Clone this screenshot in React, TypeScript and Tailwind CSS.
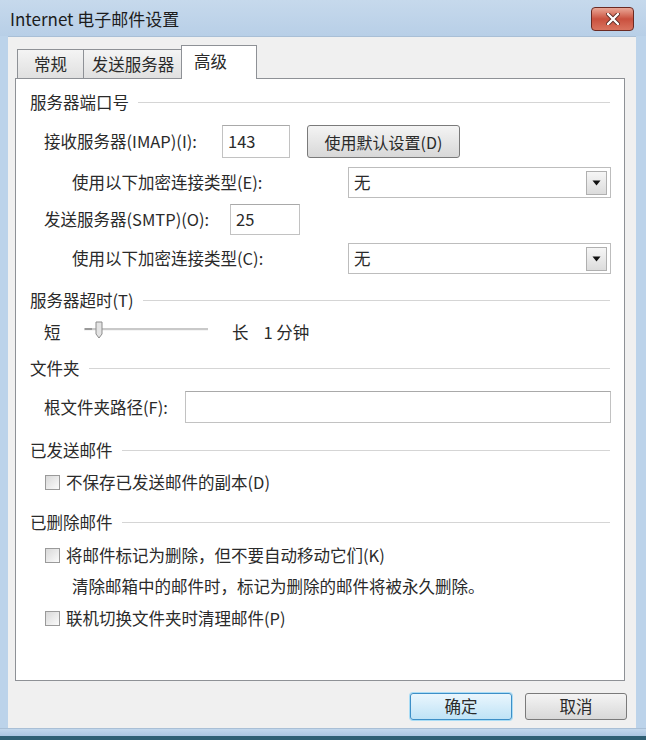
import { ReactNode } from 'react';

const FONT = "font-['Noto_Sans_CJK_SC','Noto_Sans',sans-serif]";

function GroupHeader({ title, className = '' }: { title: string; className?: string }) {
  return (
    <div className={`flex items-center h-[20px] pr-[1px] ${className}`}>
      <span className="whitespace-nowrap">{title}</span>
      <div className="flex-1 ml-[9px] h-[2px] border-t border-[#d5d5d5] border-b-white mt-[1px]" />
    </div>
  );
}

function TextBox({ value, className = '' }: { value?: string; className?: string }) {
  return (
    <div
      className={`h-full bg-white border border-[#c2c2c2] border-t-[#a9a9a9] flex items-center pl-[5px] ${className}`}
    >
      {value}
    </div>
  );
}

function Select({ value }: { value: string }) {
  return (
    <div className="w-[263px] h-[31px] bg-white border border-[#bdbdbd] flex items-center justify-between pl-[5px] pr-[3px]">
      <span>{value}</span>
      <div className="w-[21px] h-[24px] border border-[#b0b0b0] bg-gradient-to-b from-[#f6f6f6] to-[#dcdcdc] flex items-center justify-center">
        <svg width="9" height="6" viewBox="0 0 9 6">
          <path d="M0.5 0.5 H8.5 L4.5 5.5 Z" fill="#111" />
        </svg>
      </div>
    </div>
  );
}

function CheckRow({ label, className = '' }: { label: string; className?: string }) {
  return (
    <div className={`flex items-center h-[20px] pl-[15px] ${className}`}>
      <div className="w-[15px] h-[15px] border border-[#9a9a9a] bg-gradient-to-br from-[#d9d9d9] to-[#fbfbfb] mr-[6px]" />
      <span className="whitespace-nowrap">{label}</span>
    </div>
  );
}

function WinButton({ children, primary = false, className = '' }: { children: ReactNode; primary?: boolean; className?: string }) {
  return (
    <div
      className={`h-[27px] rounded-[3px] border flex items-center justify-center ${
        primary
          ? 'border-[#3d8fc7] bg-gradient-to-b from-[#eaf6fd] to-[#bfe3f6] shadow-[0_0_0_1px_#a9dcf5]'
          : 'border-[#7a7a7a] bg-gradient-to-b from-[#f4f4f4] to-[#d8d8d8]'
      } ${className}`}
    >
      {children}
    </div>
  );
}

export default function App() {
  return (
    <div className={`w-[646px] h-[740px] bg-[#bcd3ea] flex flex-col text-[16.5px] text-[#2a2a2a] leading-none ${FONT}`}>
      {/* Title bar */}
      <div className="h-[36px] flex items-center justify-between pl-[10px] pr-[12px] bg-gradient-to-b from-[#c6d9ec] to-[#b8cfe7]">
        <span className="text-[17px] text-[#1c1c1c] mt-[1px]">Internet 电子邮件设置</span>
        <div className="w-[43px] h-[24px] mt-[2px] rounded-[4px] border border-[#6b2a22] bg-gradient-to-b from-[#e9a797] via-[#c9503e] to-[#d9735f] flex items-center justify-center">
          <svg width="14" height="12" viewBox="0 0 14 12">
            <path d="M2 1 L12 11 M12 1 L2 11" stroke="#5a2a25" strokeWidth="4" strokeLinecap="round" />
            <path d="M2 1 L12 11 M12 1 L2 11" stroke="#fff" strokeWidth="2.4" strokeLinecap="round" />
          </svg>
        </div>
      </div>

      {/* Client area */}
      <div className="ml-[8px] mr-[10px] h-[692px] bg-[#f0f0f0] border-t border-[#a9bfd6] flex flex-col">
        {/* Tabs */}
        <div className="flex items-end pt-[8px] pl-[9px] h-[41px]">
          <div className="w-[67px] h-[29px] border border-b-0 border-[#8e9196] bg-gradient-to-b from-[#f4f4f4] to-[#e0e0e0] flex items-center justify-center">
            常规
          </div>
          <div className="w-[100px] h-[29px] -ml-px border border-b-0 border-[#8e9196] bg-gradient-to-b from-[#f4f4f4] to-[#e0e0e0] flex items-center justify-center">
            发送服务器
          </div>
          <div className="relative z-10 -ml-[2px] -mb-px w-[76px] h-[34px] border border-b-0 border-[#8e9196] bg-white flex items-start pt-[7px] pl-[12px]">
            高级
          </div>
        </div>

        {/* Tab panel */}
        <div className="ml-[7px] mr-[11px] h-[603px] bg-white border border-[#8e9196] pl-[14px] pr-[13px] pt-[13px] flex flex-col">
          <GroupHeader title="服务器端口号" />

          <div className="flex items-center h-[33px] mt-[13px] pl-[14px]">
            <span className="w-[178px] whitespace-nowrap">接收服务器(IMAP)(I):</span>
            <TextBox value="143" className="w-[68px]" />
            <WinButton className="ml-[17px] w-[153px] h-[33px] text-[16px]">使用默认设置(D)</WinButton>
          </div>

          <div className="flex items-center justify-between h-[31px] mt-[9px] pl-[42px]">
            <span className="whitespace-nowrap">使用以下加密连接类型(E):</span>
            <Select value="无" />
          </div>

          <div className="flex items-center h-[31px] mt-[6px] pl-[14px]">
            <span className="w-[186px] whitespace-nowrap">发送服务器(SMTP)(O):</span>
            <TextBox value="25" className="w-[70px]" />
          </div>

          <div className="flex items-center justify-between h-[31px] mt-[8px] pl-[42px]">
            <span className="whitespace-nowrap">使用以下加密连接类型(C):</span>
            <Select value="无" />
          </div>

          <GroupHeader title="服务器超时(T)" className="mt-[16px]" />

          <div className="flex items-center h-[20px] mt-[12px] pl-[14px]">
            <span className="w-[40px]">短</span>
            <svg width="124" height="20" viewBox="0 0 124 20" className="mb-[4px]">
              <rect x="0" y="8" width="124" height="2" fill="#c9c9c9" />
              <rect x="0" y="10" width="124" height="1" fill="#f4f4f4" />
              <path d="M1 9 H8" stroke="#8a8a8a" strokeWidth="1.5" />
              <path d="M12 2 H18 V14 L15 18 L12 14 Z" fill="#e4e4e4" stroke="#8c8c8c" strokeWidth="1" />
            </svg>
            <span className="ml-[24px]">长</span>
            <span className="ml-[15px]">1 分钟</span>
          </div>

          <GroupHeader title="文件夹" className="mt-[16px]" />

          <div className="flex items-center h-[32px] mt-[13px] pl-[14px]">
            <span className="w-[141px] whitespace-nowrap">根文件夹路径(F):</span>
            <TextBox className="flex-1" />
          </div>

          <GroupHeader title="已发送邮件" className="mt-[17px]" />
          <CheckRow label="不保存已发送邮件的副本(D)" className="mt-[12px]" />

          <GroupHeader title="已删除邮件" className="mt-[20px]" />
          <CheckRow label="将邮件标记为删除，但不要自动移动它们(K)" className="mt-[13px]" />
          <div className="h-[20px] mt-[11px] pl-[42px] flex items-center whitespace-nowrap">
            清除邮箱中的邮件时，标记为删除的邮件将被永久删除。
          </div>
          <CheckRow label="联机切换文件夹时清理邮件(P)" className="mt-[12px]" />
        </div>

        {/* Buttons */}
        <div className="flex justify-end gap-[13px] mt-[12px] mr-[9px]">
          <WinButton primary className="w-[102px]">确定</WinButton>
          <WinButton className="w-[102px]">取消</WinButton>
        </div>
      </div>

      {/* Bottom frame */}
      <div className="flex-1 bg-gradient-to-b from-[#c2d7ec] to-[#aac5e0] border-t border-[#a9bfd6]" />
      <div className="h-[4px] bg-[#2f5f73]" />
    </div>
  );
}
